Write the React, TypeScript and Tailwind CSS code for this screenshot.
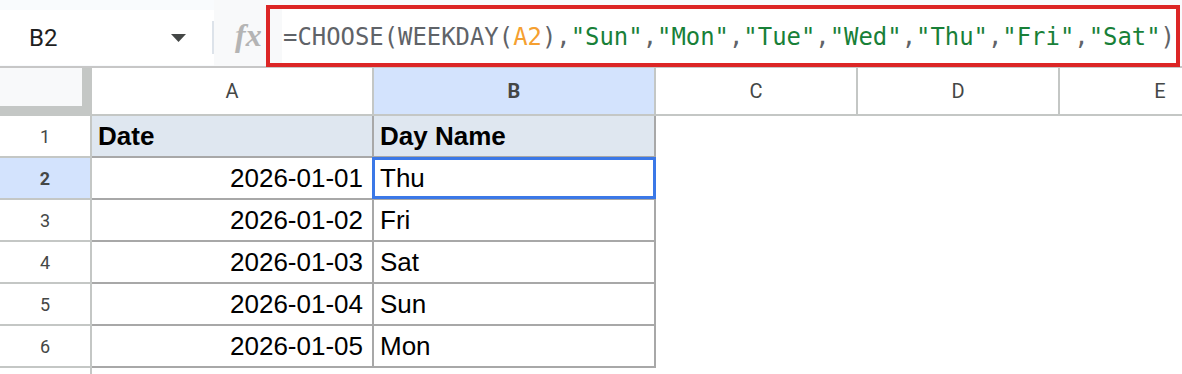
import { Fragment } from 'react';

const rows = [
  ['2026-01-01', 'Thu'],
  ['2026-01-02', 'Fri'],
  ['2026-01-03', 'Sat'],
  ['2026-01-04', 'Sun'],
  ['2026-01-05', 'Mon'],
];

const days = ['Sun', 'Mon', 'Tue', 'Wed', 'Thu', 'Fri', 'Sat'];

function FormulaText() {
  return (
    <span className="whitespace-pre text-[#5f6368]">
      =CHOOSE(WEEKDAY(<span className="text-[#f5a030]">A2</span>)
      {days.map((d) => (
        <Fragment key={d}>
          ,<span className="text-[#188038]">"{d}"</span>
        </Fragment>
      ))}
      )
    </span>
  );
}

export default function App() {
  const colHead = 'flex items-center justify-center border-r-2 border-b-2 border-[#c4c7c5] text-[20px] text-[#444746]';
  const rowHead = 'flex items-center justify-center border-r-2 border-b-2 border-[#c4c7c5] text-[18px] text-[#444746]';
  const cell = 'flex items-center border-r-2 border-b-2 border-[#a8a8a8] text-[26px] text-black';

  return (
    <div className="w-[1182px] h-[374px] overflow-hidden bg-white font-['Roboto',sans-serif]">
      {/* Formula bar */}
      <div className="flex h-[68px] bg-[#f9fbfd] border-b-2 border-[#c7c7c7]">
        <div className="flex items-center w-[214px] mt-[10px] h-[55px] bg-white">
          <span className="pl-[29px] text-[24px] text-[#1f1f1f]">B2</span>
          <svg className="ml-auto mr-[26px]" width="15" height="8" viewBox="0 0 15 8">
            <path d="M0 0 L15 0 L7.5 8 Z" fill="#444746" />
          </svg>
          <div className="w-[2px] h-[33px] bg-[#dde3ea]" />
        </div>
        <div className="flex items-center w-[52px] pl-[21px] pt-[4px] bg-[#f8f9fa]">
          <span className="font-['Liberation_Serif',serif] italic font-bold text-[32px] leading-none text-[#b4b4b4]">fx</span>
        </div>
        <div className="flex mt-[5px] h-[62px] w-[914px] border-4 border-[#dc2626] bg-[#f8f9fa]">
          <div className="flex items-center flex-1 ml-[12px] bg-white pl-[1px] pt-[3px] font-['DejaVu_Sans_Mono',monospace] text-[23.9px]">
            <FormulaText />
          </div>
        </div>
      </div>

      {/* Grid */}
      <div className="grid grid-cols-[92px_282px_282px_202px_202px_202px] grid-rows-[48px_repeat(6,42px)_42px]">
        <div className="bg-[#f8f9fa] border-r-[10px] border-b-[10px] border-[#c4c7c5]" />
        <div className={colHead}>A</div>
        <div className={`${colHead} bg-[#d3e3fd] font-bold text-[#041e49]`}>B</div>
        <div className={colHead}>C</div>
        <div className={colHead}>D</div>
        <div className={colHead}>E</div>

        {/* Header row */}
        <div className={rowHead}>1</div>
        <div className={`${cell} bg-[#dfe7f0] pl-[6px] font-['Liberation_Sans',Arial,sans-serif] font-bold`}>Date</div>
        <div className={`${cell} bg-[#dfe7f0] pl-[6px] font-['Liberation_Sans',Arial,sans-serif] font-bold`}>Day Name</div>
        <div />
        <div />
        <div />

        {rows.map(([date, day], i) => {
          const selected = i === 0;
          return (
            <Fragment key={date}>
              <div className={selected ? `${rowHead} bg-[#d3e3fd] font-bold text-[#041e49]` : rowHead}>{i + 2}</div>
              <div className={`${cell} justify-end pr-[9px] font-['Liberation_Sans',Arial,sans-serif]`}>{date}</div>
              <div className={`${cell} relative pl-[6px] font-['Liberation_Sans',Arial,sans-serif]`}>
                {day}
                {selected && (
                  <div className="absolute -left-[2px] -right-[2px] -top-[1px] -bottom-[1px] border-[3px] border-[#3b78e7]" />
                )}
              </div>
              <div />
              <div />
              <div />
            </Fragment>
          );
        })}

        <div className="border-r-2 border-[#c4c7c5]" />
      </div>
    </div>
  );
}
